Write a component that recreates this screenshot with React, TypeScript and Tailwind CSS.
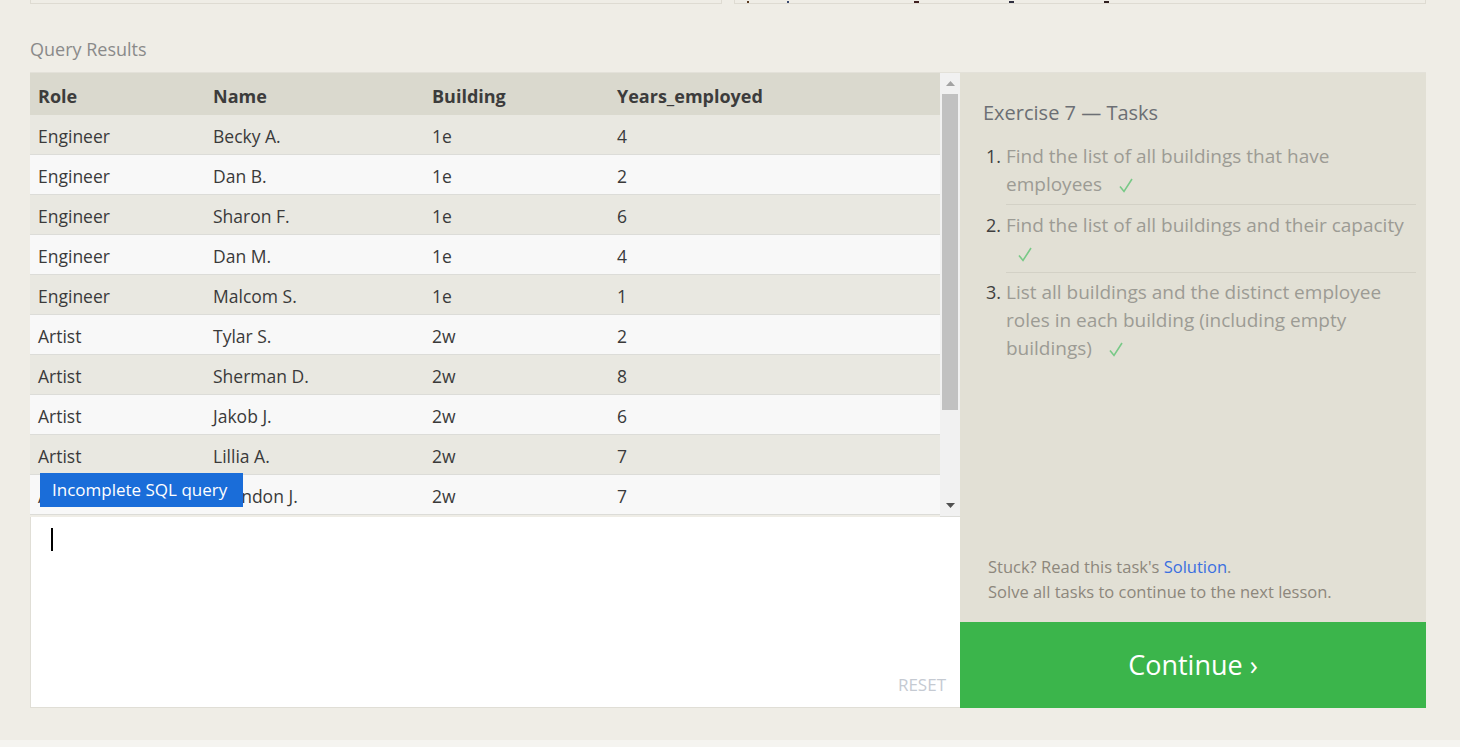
import React from "react";

const rows: [string, string, string, string][] = [
  ["Engineer", "Becky A.", "1e", "4"],
  ["Engineer", "Dan B.", "1e", "2"],
  ["Engineer", "Sharon F.", "1e", "6"],
  ["Engineer", "Dan M.", "1e", "4"],
  ["Engineer", "Malcom S.", "1e", "1"],
  ["Artist", "Tylar S.", "2w", "2"],
  ["Artist", "Sherman D.", "2w", "8"],
  ["Artist", "Jakob J.", "2w", "6"],
  ["Artist", "Lillia A.", "2w", "7"],
  ["Artist", "Brandon J.", "2w", "7"],
];

const font = { fontFamily: '"Open Sans", "Noto Sans", sans-serif' };

function Check() {
  return (
    <span className="inline-block ml-[12px] align-baseline">
      <svg width="14" height="15" viewBox="0 0 14 15" className="inline-block">
        <path d="M1 8.5 L5 13.5 L13 1" fill="none" stroke="#78c987" strokeWidth="1.6" />
      </svg>
    </span>
  );
}

const tasks = [
  <>Find the list of all buildings that have employees <Check /></>,
  <>Find the list of all buildings and their capacity <Check /></>,
  <>List all buildings and the distinct employee roles in each building (including empty buildings) <Check /></>,
];

export default function App() {
  return (
    <div className="w-[1460px] h-[747px] overflow-hidden bg-[#efede6] flex flex-col" style={font}>
      {/* top strip */}
      <div className="flex gap-[12px] pl-[30px] pr-[34px] shrink-0">
        <div className="w-[692px] h-[4px] border-x border-b border-[#dedbd2]" />
        <div className="w-[692px] h-[4px] border-x border-b border-[#dedbd2] flex items-end gap-[20px] pl-[12px]">
          <span className="w-[2px] h-[2px] bg-[#5a3a20]" />
          <span className="w-[2px] h-[2px] bg-[#3a4a70] ml-[18px]" />
          <span className="w-[5px] h-[2px] bg-[#402020] ml-[105px]" />
          <span className="w-[5px] h-[2px] bg-[#303040] ml-[70px]" />
          <span className="w-[5px] h-[2px] bg-[#302020] ml-[70px]" />
        </div>
      </div>

      <div className="pl-[30px] mt-[33px] mb-[11px] text-[18px] leading-[24px] text-[#8a8a8a]">Query Results</div>

      <div className="ml-[30px] w-[1396px] h-[636px] flex border-t border-[#e3e1d9] shrink-0">
        {/* left */}
        <div className="w-[930px] flex flex-col relative">
          <div className="flex h-[444px]">
            <div className="w-[910px] flex flex-col">
              <div className="flex h-[42px] bg-[#dad9ce] items-center pt-[4px] text-[18px] font-bold text-[#3c3c3c]">
                <div className="w-[175px] pl-[8px]">Role</div>
                <div className="w-[219px] pl-[8px]">Name</div>
                <div className="w-[185px] pl-[8px]">Building</div>
                <div className="flex-1 pl-[8px]">Years_employed</div>
              </div>
              {rows.map((r, i) => (
                <div
                  key={i}
                  className={
                    "flex h-[40px] items-center pt-[3px] text-[17.5px] text-[#3a3a3a] border-b border-[#dcdcd8] " +
                    (i % 2 === 0 ? "bg-[#e9e8e1]" : "bg-[#f8f8f8]")
                  }
                >
                  <div className="w-[175px] pl-[8px]">{r[0]}</div>
                  <div className="w-[219px] pl-[8px]">{r[1]}</div>
                  <div className="w-[185px] pl-[8px]">{r[2]}</div>
                  <div className="flex-1 pl-[8px]">{r[3]}</div>
                </div>
              ))}
            </div>
            {/* scrollbar */}
            <div className="w-[20px] bg-[#f1f1f1] flex flex-col items-center border-b border-[#dcdcd8]">
              <div className="h-[21px] flex items-center justify-center">
                <svg width="9" height="5" viewBox="0 0 9 5"><path d="M4.5 0 L9 5 L0 5 Z" fill="#a3a3a3" /></svg>
              </div>
              <div className="w-[16px] h-[316px] bg-[#c1c1c1]" />
              <div className="flex-1" />
              <div className="h-[22px] flex items-center justify-center">
                <svg width="9" height="5" viewBox="0 0 9 5"><path d="M0 0 L9 0 L4.5 5 Z" fill="#505050" /></svg>
              </div>
            </div>
          </div>
          {/* editor */}
          <div className="flex-1 bg-white border-l border-b border-[#e0ded6] relative">
            <div className="absolute left-[20px] top-[11px] w-[2px] h-[23px] bg-black" />
            <div className="absolute right-[14px] bottom-[10px] text-[17px] text-[#c5cad2]">RESET</div>
          </div>
          {/* tooltip */}
          <div className="absolute left-[10px] top-[400px] h-[34px] w-[203px] pl-[12px] flex items-center bg-[#1a6dd9] text-white text-[17px]">
            Incomplete SQL query
          </div>
        </div>

        {/* right panel */}
        <div className="flex-1 flex flex-col">
          <div className="flex-1 bg-[#e2e0d5] flex flex-col">
            <div className="pl-[23px] pt-[27px] text-[20px] leading-[26px] text-[#6c6f74]">Exercise 7 — Tasks</div>
            <div className="mt-[16px] pl-[26px] pr-[10px] flex flex-col text-[19px] leading-[28px]">
              {tasks.map((t, i) => (
                <div key={i} className={"flex " + (i === 1 ? "pt-[6px]" : i === 2 ? "pt-[5px]" : "")}>
                  <div className="w-[20px] text-[#3f3f3f] shrink-0 text-[18px]">{i + 1}.</div>
                  <div
                    className={
                      "flex-1 text-[#9c9b94] " +
                      (i === 0 ? "pb-[6px] border-b border-[#d3d1c6]" : i === 1 ? "pb-[5px] border-b border-[#d3d1c6]" : "")
                    }
                  >
                    {t}
                  </div>
                </div>
              ))}
            </div>
            <div className="flex-1" />
            <div className="pl-[28px] pb-[18px] text-[16.5px] leading-[25px] text-[#8d877c]">
              <div>
                Stuck? Read this task's <span className="text-[#3a6fe0]">Solution</span>.
              </div>
              <div>Solve all tasks to continue to the next lesson.</div>
            </div>
          </div>
          <div className="h-[86px] bg-[#3bb54b] flex items-center justify-center text-white text-[27px]">
            Continue ›
          </div>
        </div>
      </div>

      <div className="flex-1" />
      <div className="h-[7px] bg-[#f5f4f0] shrink-0" />
    </div>
  );
}
